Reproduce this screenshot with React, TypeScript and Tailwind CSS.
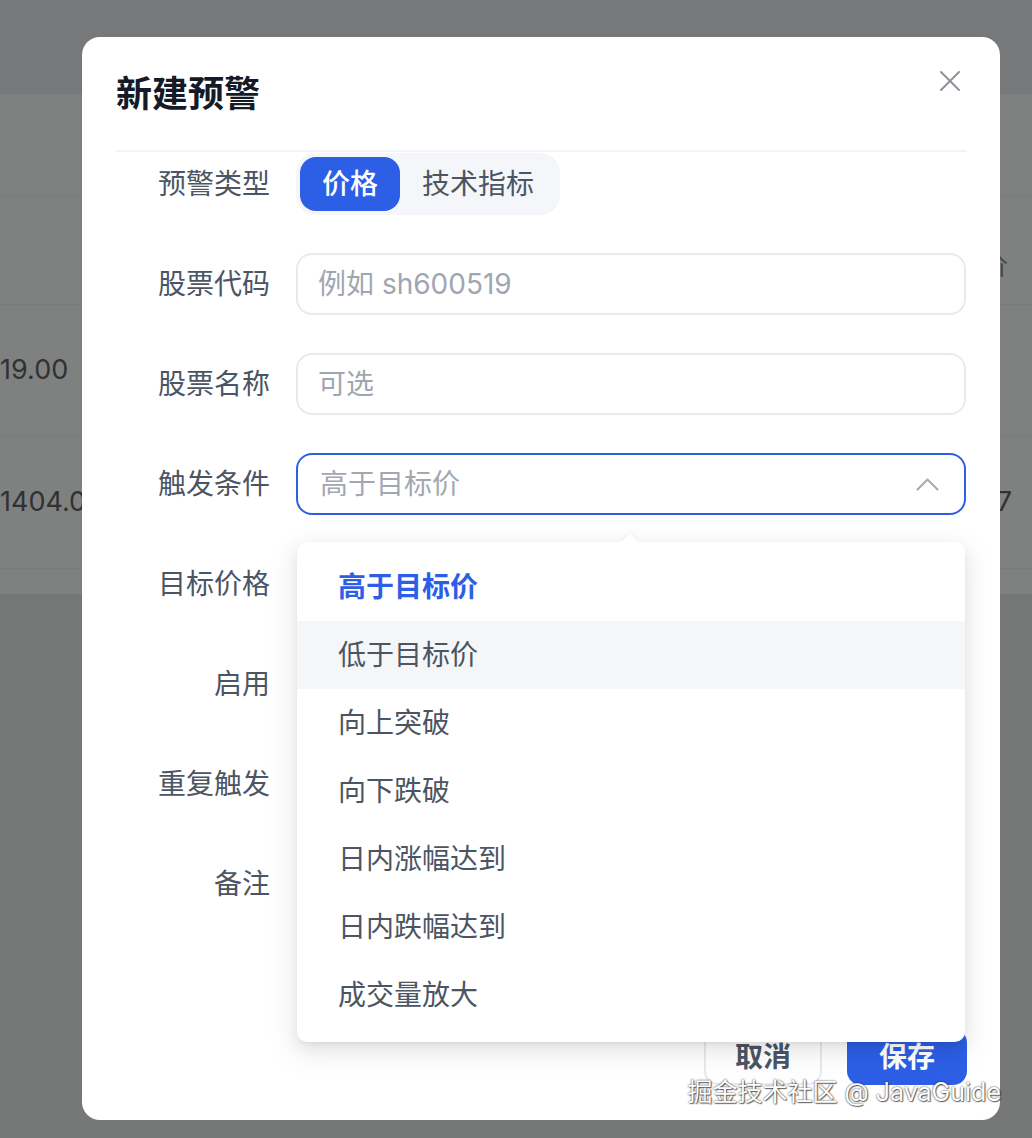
import React from "react";

const fontCls = "font-[family-name:Inter,'Noto_Sans_CJK_SC',sans-serif]";

const triggerOptions = [
  "高于目标价",
  "低于目标价",
  "向上突破",
  "向下跌破",
  "日内涨幅达到",
  "日内跌幅达到",
  "成交量放大",
];

function FormRow({ label, children }: { label: string; children?: React.ReactNode }) {
  return (
    <div className="flex h-[62px] items-center gap-[26px]">
      <div className="w-[154px] shrink-0 text-right text-[28px] leading-none text-[#4b5563]">{label}</div>
      <div className="relative h-full flex-1">{children}</div>
    </div>
  );
}

function TextField({ placeholder }: { placeholder: string }) {
  return (
    <input
      readOnly
      placeholder={placeholder}
      className="h-full w-[670px] rounded-[16px] border-2 border-[#e8eaee] bg-white px-[20px] text-[28px] text-[#374151] outline-none placeholder:text-[#a0a6b0]"
    />
  );
}

function TriggerSelect() {
  return (
    <>
      <div className="flex h-full w-[670px] items-center justify-between rounded-[16px] border-2 border-[#2d5fe3] pl-[22px] pr-[25px]">
        <span className="text-[28px] leading-none text-[#a3a8b0]">高于目标价</span>
        <svg width="23" height="14" viewBox="0 0 23 14" fill="none">
          <path d="M1.5 12.5 L11.5 2.5 L21.5 12.5" stroke="#a5a9b0" strokeWidth="2" strokeLinecap="round" strokeLinejoin="round" />
        </svg>
      </div>
      {/* open option list */}
      <div className="absolute left-[1px] top-[calc(100%+27px)] z-10 w-[668px] rounded-[10px] bg-white pb-[13px] pt-[11px] shadow-[0_6px_16px_0_rgba(0,0,0,0.08),0_3px_6px_-4px_rgba(0,0,0,0.12),0_9px_28px_8px_rgba(0,0,0,0.05)]">
        <div className="absolute left-[327px] top-[-6px] h-[12px] w-[12px] rotate-45 bg-white shadow-[-2px_-2px_4px_rgba(0,0,0,0.03)]" />
        {triggerOptions.map((opt, i) => (
          <div
            key={opt}
            className={
              i === 0
                ? "relative flex h-[68px] items-center px-[41px] text-[28px] font-semibold text-[#2c5fe6]"
                : i === 1
                ? "relative flex h-[68px] items-center bg-[#f5f6f8] px-[41px] text-[28px] text-[#4b5563]"
                : "relative flex h-[68px] items-center px-[41px] text-[28px] text-[#4b5563]"
            }
          >
            {opt}
          </div>
        ))}
      </div>
    </>
  );
}

export default function App() {
  return (
    <div className={`relative h-[1138px] w-[1032px] overflow-hidden bg-[#767777] ${fontCls}`}>
      {/* dimmed page behind the dialog */}
      <div className="h-[94px] bg-[#777879]" />
      <div className="bg-[#7f8080] text-[#303132]">
        <div className="h-[102px] border-b border-[#7a7a7b]" />
        <div className="flex h-[109px] items-center justify-end border-b border-[#7a7a7b] pr-[24px] pt-[30px]">
          <span className="text-[26px] text-[#474849]">现价</span>
        </div>
        <div className="flex h-[132px] items-center border-b border-[#7a7a7b]">
          <span className="text-[27px]">19.00</span>
        </div>
        <div className="flex h-[132px] items-center justify-between border-b border-[#7a7a7b] pr-[20px]">
          <span className="text-[27px]">1404.00</span>
          <span className="text-[27px]">1.37</span>
        </div>
        <div className="h-[25px]" />
      </div>

      {/* dialog */}
      <div className="absolute left-[82px] top-[37px] flex h-[1083px] w-[918px] flex-col rounded-[18px] bg-white pl-[34px] pr-[33px]">
        <div className="flex h-[113px] items-center justify-between">
          <h2 className="text-[36px] font-bold leading-none text-[#141a26]">新建预警</h2>
          <button className="mb-[26px] mr-[6px] flex h-[22px] w-[22px] items-center justify-center">
            <svg width="22" height="22" viewBox="0 0 22 22" fill="none">
              <path d="M2 2 L20 20 M20 2 L2 20" stroke="#8e9299" strokeWidth="2" strokeLinecap="round" />
            </svg>
          </button>
        </div>
        <div className="h-[2px] bg-[#f2f3f5]" />

        <div className="mt-[1px] flex flex-col gap-[38px]">
          <FormRow label="预警类型">
            <div className="inline-flex h-full items-center rounded-[20px] bg-[#f4f6f9] p-[4px]">
              <button className="h-[54px] rounded-[16px] bg-[#2c5fe6] px-[22px] text-[28px] font-medium leading-none text-white">价格</button>
              <button className="h-[54px] px-[22px] text-[28px] leading-none text-[#4b5563]">技术指标</button>
            </div>
          </FormRow>
          <FormRow label="股票代码">
            <TextField placeholder="例如 sh600519" />
          </FormRow>
          <FormRow label="股票名称">
            <TextField placeholder="可选" />
          </FormRow>
          <FormRow label="触发条件">
            <TriggerSelect />
          </FormRow>
          <FormRow label="目标价格" />
          <FormRow label="启用" />
          <FormRow label="重复触发" />
          <FormRow label="备注" />
        </div>

        <div className="mt-[114px] flex justify-end gap-[25px]">
          <button className="h-[56px] w-[118px] rounded-[14px] border-2 border-[#e8eaee] bg-white text-[28px] font-semibold text-[#4b5563]">取消</button>
          <button className="h-[56px] w-[120px] rounded-[14px] bg-[#2c5fe6] text-[28px] font-semibold text-white">保存</button>
        </div>
      </div>

      {/* site watermark */}
      <div className="absolute right-[31px] top-[1080px] text-[25px] leading-none text-white [text-shadow:0_0_2px_rgba(0,0,0,0.85),1px_1px_1px_rgba(0,0,0,0.5)]">
        掘金技术社区 @ JavaGuide
      </div>
    </div>
  );
}
